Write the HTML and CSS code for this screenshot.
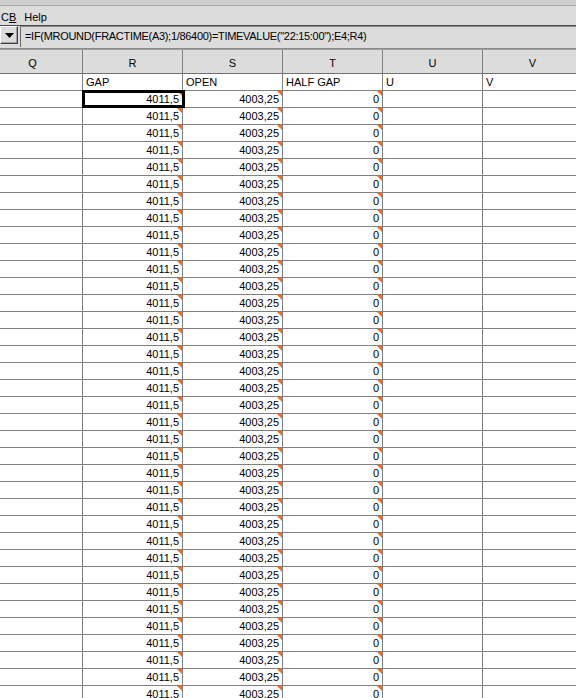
FILE: index.html
```html
<!DOCTYPE html>
<html lang="en">
<head>
    <meta charset="UTF-8">
    <meta name="viewport" content="width=device-width, initial-scale=1.0">
    <title>Sheet1</title>
    <link rel="stylesheet" href="styles.css">
</head>
<body>
    <div class="title-strip"></div>
    <div class="menu-bar">
        <span class="menu-item">C<u>B</u></span>
        <span class="menu-item">Help</span>
    </div>
    <div class="formula-bar">
        <div class="name-drop">
            <svg width="9" height="5" viewBox="0 0 9 5"><path d="M0 0h9L4.5 5z" fill="#000"/></svg>
        </div>
        <div class="formula-input">=IF(MROUND(FRACTIME(A3);1/86400)=TIMEVALUE("22:15:00");E4;R4)</div>
    </div>
    <div class="sheet">
        <div class="row col-heads">
            <div class="cell head">Q</div>
            <div class="cell head">R</div>
            <div class="cell head">S</div>
            <div class="cell head">T</div>
            <div class="cell head">U</div>
            <div class="cell head">V</div>
        </div>
        <div class="row">
            <div class="cell"></div>
            <div class="cell">GAP</div>
            <div class="cell">OPEN</div>
            <div class="cell">HALF GAP</div>
            <div class="cell">U</div>
            <div class="cell">V</div>
        </div>
        <div id="rows"></div>
    </div>

    <script>
        // Fill the sheet with the gap / open / half gap values
        const rows = document.getElementById('rows');
        for (let i = 0; i < 36; i++) {
            const row = document.createElement('div');
            row.className = 'row';
            row.innerHTML =
                '<div class="cell"></div>' +
                '<div class="cell num note' + (i === 0 ? ' selected' : '') + '">4011,5</div>' +
                '<div class="cell num note">4003,25</div>' +
                '<div class="cell num note">0</div>' +
                '<div class="cell"></div>' +
                '<div class="cell"></div>';
            rows.appendChild(row);
        }
    </script>
</body>
</html>
```

FILE: styles.css
```css
body {
    margin: 0;
    font-family: "Liberation Sans", Arial, sans-serif;
    font-size: 11px;
    color: #000;
    background-color: #fff;
    overflow: hidden;
}
.title-strip {
    height: 5px;
    background-color: #cdcdcd;
    border-bottom: 1px solid #a6a6a6;
}
.menu-bar {
    height: 20px;
    box-sizing: border-box;
    background-color: #dcdcdc;
    border-bottom: 1px solid #4a4a4a;
    display: flex;
    align-items: center;
    gap: 8px;
    padding-left: 1px;
    padding-top: 1px;
}
.menu-item {
    padding-top: 1px;
}
.formula-bar {
    display: flex;
    gap: 2px;
    background-color: #dcdcdc;
    border-bottom: 1px solid #8a8a8a;
    padding-bottom: 1px;
}
.name-drop {
    width: 18px;
    height: 18px;
    box-sizing: border-box;
    border: 1px solid;
    border-color: #fff #404040 #404040 #fff;
    box-shadow: inset -1px -1px 0 #a0a0a0;
    display: flex;
    justify-content: center;
    align-items: center;
}
.formula-input {
    flex: 1;
    height: 21px;
    box-sizing: border-box;
    border-left: 1px solid #6a6a6a;
    border-top: 1px solid #8a8a8a;
    padding-left: 4px;
    font-size: 11px;
    letter-spacing: -0.3px;
    line-height: 19px;
}
.sheet {
    margin-left: -17px;
}
.row {
    display: flex;
    height: 17px;
}
.cell {
    position: relative;
    flex: 0 0 100px;
    box-sizing: border-box;
    border-right: 1px solid #808080;
    border-bottom: 1px solid #808080;
    padding: 0 3px;
    line-height: 16px;
    white-space: nowrap;
}
.col-heads {
    height: 24px;
    border-top: 1px solid #a0a0a0;
}
.head {
    background-color: #dcdcdc;
    text-align: center;
    line-height: 26px;
    border-bottom-color: #707070;
}
.num {
    text-align: right;
}
/* comment marker in the top-right corner */
.note::after {
    content: "";
    position: absolute;
    top: 0;
    right: 0;
    border-top: 5px solid #ff6a10;
    border-left: 5px solid transparent;
}
/* cell cursor */
.selected::before {
    content: "";
    position: absolute;
    top: -1px;
    left: -1px;
    right: -3px;
    bottom: -1px;
    border: 3px solid #000;
    z-index: 1;
}
```
